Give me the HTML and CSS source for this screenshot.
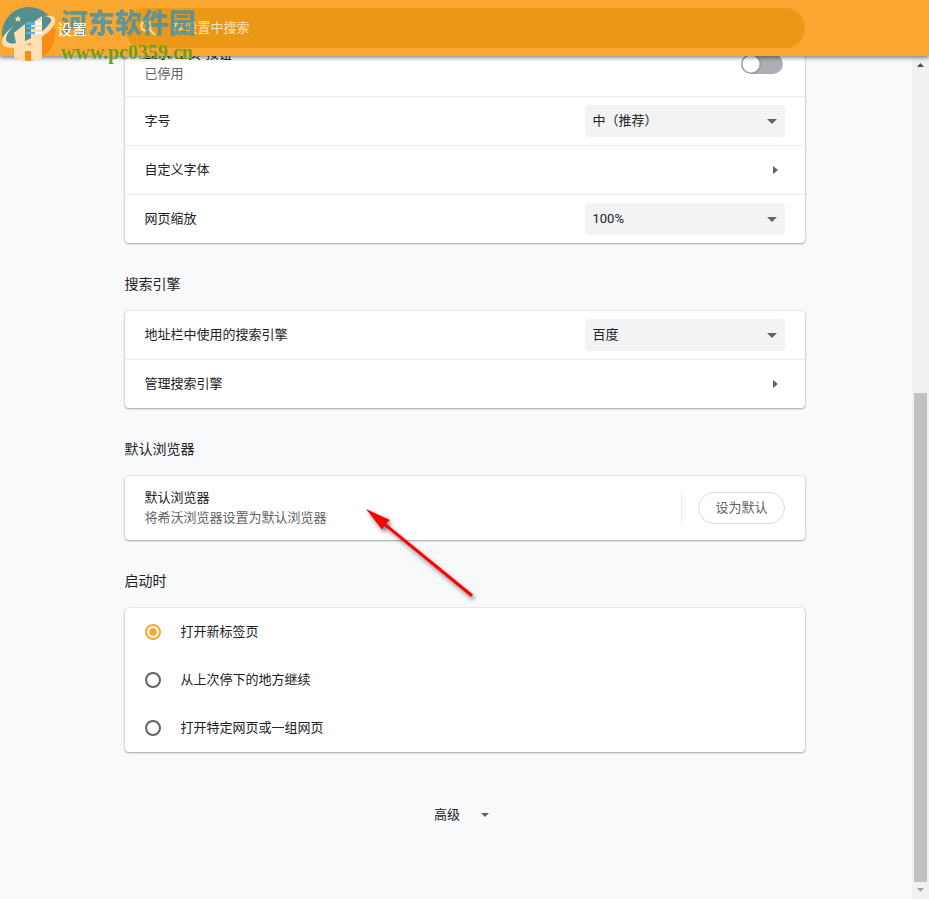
FILE: index.html
```html
<!DOCTYPE html>
<html lang="zh-CN">
<head>
  <meta charset="utf-8">
  <title>设置</title>
  <link rel="stylesheet" href="styles.css">
</head>
<body>
  <header class="toolbar">
    <button class="menu-button" type="button" aria-label="菜单">
      <svg width="16" height="12" viewBox="0 0 16 12"><path d="M0 0h9v3H0zM0 5h9v2H0zM0 10h9v2H0z" fill="#5cb0e2"/><path d="M9 0h7v3H9zM9 5h7v2H9zM9 10h7v2H9z" fill="#fff"/></svg>
    </button>
    <h1 class="toolbar__title">设置</h1>
    <label class="search">
      <svg class="search__icon" width="16" height="16" viewBox="0 0 16 16"><circle cx="6" cy="6" r="4.7"/><path d="M9.5 9.5L15 15"/></svg>
      <input class="search__input" type="search" placeholder="在设置中搜索" aria-label="在设置中搜索">
    </label>

    <div class="watermark">
      <svg class="watermark__logo" width="58" height="64" viewBox="0 0 58 64">
        <path d="M2 36A27 27 0 0 1 52 20L36 40L10 48z" fill="#538f8e"/>
        <path d="M55 30A27 27 0 0 1 14 57V46L40 38L53 24z" fill="#f98d13"/>
        <path d="M14 33L25 24V45H31V24L42 16V58Q37 61 31 61V51H25V61Q19 60 14 57V46L16 43z" fill="#fcdfb2"/>
        <path d="M14 26C5 32 1 39 2 43C5 51 21 48 35 41C48 34 57 25 55 19Q53 14 44 16Q53 17 51 22C47 29 37 36 25 41C14 45 6 44 6 39Q6 33 14 26z" fill="#fcdfb2"/>
        <path d="M18 15.500l1 2.200 2.500 0-1.800 1.600.7 2.500-2.400-1.400-2.400 1.400.7-2.500-1.800-1.600 2.500 0z" fill="#fcdfb2"/>
      </svg>
      <div class="watermark__text">
        <span class="watermark__name">河东软件园</span>
        <span class="watermark__url">www.pc0359.cn</span>
      </div>
    </div>
  </header>

  <main class="content">
    <section class="card">
      <div class="row row--tall">
        <label class="row__text" for="homeButton">
          <span>显示“主页”按钮</span>
          <span class="row__sub">已停用</span>
        </label>
        <input class="toggle" type="checkbox" id="homeButton">
      </div>
      <div class="row">
        <label class="row__text" for="fontSize">字号</label>
        <select class="select" id="fontSize"><option>中（推荐）</option></select>
      </div>
      <a class="row" href="#fonts">
        <span class="row__text">自定义字体</span>
        <span class="arrow-right"></span>
      </a>
      <div class="row">
        <label class="row__text" for="pageZoom">网页缩放</label>
        <select class="select" id="pageZoom"><option>100%</option></select>
      </div>
    </section>

    <h2 class="section-title">搜索引擎</h2>
    <section class="card">
      <div class="row">
        <label class="row__text" for="engine">地址栏中使用的搜索引擎</label>
        <select class="select" id="engine"><option>百度</option></select>
      </div>
      <a class="row" href="#engines">
        <span class="row__text">管理搜索引擎</span>
        <span class="arrow-right"></span>
      </a>
    </section>

    <h2 class="section-title">默认浏览器</h2>
    <section class="card">
      <div class="row row--tall">
        <div class="row__text">
          <span>默认浏览器</span>
          <span class="row__sub">将希沃浏览器设置为默认浏览器</span>
        </div>
        <div class="row__action">
          <button class="button" type="button">设为默认</button>
        </div>
      </div>
    </section>

    <h2 class="section-title">启动时</h2>
    <section class="card">
      <label class="option"><input class="radio" type="radio" name="startup" checked><span>打开新标签页</span></label>
      <label class="option"><input class="radio" type="radio" name="startup"><span>从上次停下的地方继续</span></label>
      <label class="option"><input class="radio" type="radio" name="startup"><span>打开特定网页或一组网页</span></label>
    </section>

    <button class="advanced" type="button">高级<span class="arrow-down"></span></button>
  </main>

  <div class="scrollbar">
    <svg class="scrollbar__arrow" width="17" height="17" viewBox="0 0 17 17"><path d="M5 11h7L8.500 7z" fill="#505050"/></svg>
    <div class="scrollbar__thumb"></div>
    <svg class="scrollbar__arrow" width="17" height="17" viewBox="0 0 17 17"><path d="M5 6h7l-3.500 4z" fill="#a3a3a3"/></svg>
  </div>

  <svg class="pointer" width="124" height="104" viewBox="0 0 124 104">
    <path d="M5 8L29 19L25 22.500L112 93.500L110 96L23.500 25L21 28.500z" fill="#f00"/>
  </svg>
</body>
</html>
```
FILE: styles.css
```css
:root {
  --orange: #faa732;
  --text: #202124;
  --grey: #5f6368;
  --column: 680px;
}

* {
  box-sizing: border-box;
  margin: 0;
  padding: 0;
}

body {
  height: 100vh;
  overflow: hidden;
  background: #f8f9fb;
  color: var(--text);
  font-family: Roboto, "Noto Sans CJK SC", sans-serif;
  font-size: 13px;
  line-height: 20px;
}

button, input, select {
  font: inherit;
  color: inherit;
}

a {
  color: inherit;
  text-decoration: none;
}

/* toolbar */
.toolbar {
  position: relative;
  z-index: 2;
  display: grid;
  grid-template-columns: minmax(124px, 1fr) minmax(0, var(--column)) minmax(0, 1fr);
  align-items: center;
  height: 56px;
  background: var(--orange);
  box-shadow: 0 2px 4px rgba(0, 0, 0, .45);
  color: #fff;
}

.menu-button {
  z-index: 2;
  grid-area: 1 / 1;
  justify-self: start;
  display: flex;
  padding: 8px;
  margin-left: 18px;
  background: none;
  border: 0;
}

.toolbar__title {
  z-index: 2;
  grid-area: 1 / 1;
  padding-left: 57px;
  padding-top: 4px;
  font-size: 15px;
  font-weight: 400;
}

.search {
  grid-area: 1 / 2;
  display: flex;
  align-items: center;
  gap: 16px;
  height: 40px;
  padding: 0 15px;
  border-radius: 20px;
  background: #ec9817;
}

.search__icon {
  fill: none;
  stroke: #fcdfb2;
  stroke-width: 2;
}

.search__input {
  flex: 1;
  background: none;
  border: 0;
  outline: 0;
}

.search__input::placeholder {
  color: #fbe3bd;
}

/* settings list, first card is scrolled up under the toolbar */
.content {
  display: flex;
  flex-direction: column;
  max-width: var(--column);
  margin: -24px auto 0;
}

.card {
  background: #fff;
  border-radius: 4px;
  box-shadow: 0 1px 2px rgba(60, 64, 67, .4), 0 0 2px rgba(60, 64, 67, .25);
}

.section-title {
  padding: 31px 0 17px;
  font-size: 14px;
  font-weight: 400;
}

.row {
  display: flex;
  align-items: center;
  height: 48px;
  padding: 0 20px;
}

.row + .row {
  height: 49px;
  border-top: 1px solid #ececee;
}

.row--tall {
  height: 64px;
}

.row__text {
  display: flex;
  flex: 1;
  flex-direction: column;
}

.row__sub {
  color: var(--grey);
}

.row__action {
  padding-left: 16px;
  border-left: 1px solid #ececee;
}

.select {
  width: 200px;
  height: 32px;
  padding: 0 8px;
  border: 0;
  border-radius: 4px;
  appearance: none;
  background: #f1f3f4 url("data:image/svg+xml,%3Csvg xmlns='http://www.w3.org/2000/svg' width='10' height='5'%3E%3Cpath d='M0 0h10L5 5z' fill='%235f6368'/%3E%3C/svg%3E") no-repeat right 8px center;
}

.toggle {
  width: 42px;
  height: 20px;
  margin-right: 2px;
  border-radius: 10px;
  appearance: none;
  background: radial-gradient(circle at 10px 10px, #fff 8px, #929296 9px, #aeadb3 11px);
}

.button {
  height: 32px;
  padding: 0 16px;
  border: 1px solid #dadce0;
  border-radius: 16px;
  background: #fff;
  color: var(--grey);
}

.arrow-right {
  margin-right: 7px;
  border: solid transparent;
  border-width: 4px 0 4px 5px;
  border-left-color: var(--grey);
}

.arrow-down {
  border: solid transparent;
  border-width: 4px 4px 0;
  border-top-color: var(--grey);
}

.option {
  display: flex;
  align-items: center;
  gap: 20px;
  height: 48px;
  padding: 0 20px;
}

.radio {
  width: 16px;
  height: 16px;
  border: 2px solid var(--grey);
  border-radius: 50%;
  appearance: none;
}

.radio:checked {
  border-color: var(--orange);
  background: radial-gradient(circle, var(--orange) 3px, #fff 5px);
}

.advanced {
  display: flex;
  align-items: center;
  align-self: center;
  gap: 21px;
  margin-top: 43px;
  padding: 10px 16px 10px 10px;
  background: none;
  border: 0;
}

/* scrollbar */
.scrollbar {
  position: fixed;
  top: 56px;
  right: 0;
  bottom: 0;
  display: flex;
  flex-direction: column;
  justify-content: flex-end;
  width: 17px;
  background: #f1f1f1;
}

.scrollbar__arrow:first-child {
  margin-bottom: auto;
}

.scrollbar__thumb {
  height: 58%;
  margin: 0 2px;
  background: #c1c1c1;
}

/* overlays */
.pointer {
  position: absolute;
  top: 501px;
  left: 361px;
  filter: drop-shadow(2px 3px 2px rgba(0, 0, 0, .5));
}

.watermark {
  position: absolute;
  top: 0;
  left: 0;
  z-index: 1;
  display: flex;
  gap: 3px;
  pointer-events: none;
}

.watermark__text {
  display: flex;
  flex-direction: column;
  padding-top: 8px;
  white-space: nowrap;
}

.watermark__name {
  color: rgba(47, 145, 185, .75);
  font-size: 27px;
  font-weight: 900;
  line-height: 32px;
}

.watermark__url {
  color: #6d9e1f;
  font-family: "Liberation Serif", serif;
  font-size: 20px;
  font-weight: 700;
  line-height: 24px;
}
```
